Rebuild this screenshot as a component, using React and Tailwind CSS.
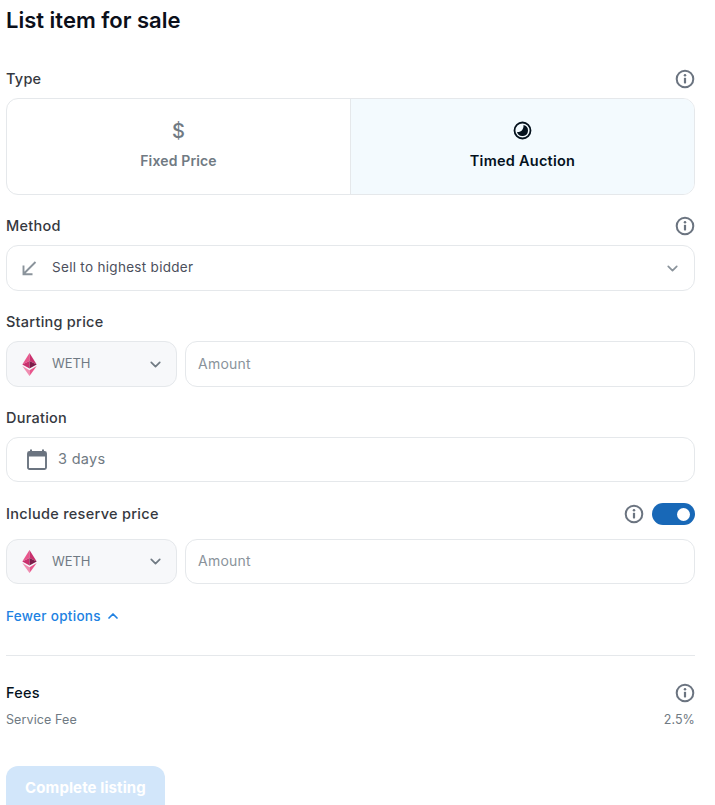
import { ChevronDown, ChevronUp } from 'lucide-react'

const InfoIcon = () => (
  <svg className="w-5 h-5 text-[#6b7480]" viewBox="0 0 20 20" fill="none">
    <circle cx="10" cy="10" r="8.3" stroke="currentColor" strokeWidth="2" />
    <circle cx="10" cy="6.2" r="1.25" fill="currentColor" />
    <rect x="8.9" y="8.8" width="2.2" height="5.6" rx="0.6" fill="currentColor" />
  </svg>
)

const EthIcon = () => (
  <svg className="w-[15px] h-[23px] shrink-0" viewBox="0 0 15 23">
    <path d="M7.5 0 L0.3 11.5 L7.5 8 Z" fill="#e8568c" />
    <path d="M7.5 0 L14.7 11.5 L7.5 8 Z" fill="#c9306d" />
    <path d="M0.3 11.5 L7.5 15.6 L7.5 8 Z" fill="#c9306d" />
    <path d="M14.7 11.5 L7.5 15.6 L7.5 8 Z" fill="#7d1d4a" />
    <path d="M0.3 13 L7.5 17.2 L7.5 23 Z" fill="#f08db0" />
    <path d="M14.7 13 L7.5 17.2 L7.5 23 Z" fill="#e8568c" />
  </svg>
)

const SectionLabel = ({ children, right }) => (
  <div className="flex items-center justify-between h-5 mb-[9px]">
    <span className="text-[14.5px] font-[550] tracking-[0.25px] text-[#353840]">{children}</span>
    {right}
  </div>
)

const PriceRow = ({ height }) => (
  <div className="flex gap-2">
    <div className={`w-[171px] ${height} shrink-0 flex items-center bg-[#f7f8fa] border border-[#e5e8eb] rounded-xl pl-[15px] pr-3`}>
      <EthIcon />
      <span className="ml-[15px] text-[13px] tracking-[-0.1px] text-[#707a83]">WETH</span>
      <ChevronDown className="ml-auto w-[17px] h-[17px] text-[#707a83]" strokeWidth={2.4} />
    </div>
    <div className={`flex-1 ${height} flex items-center border border-[#e5e8eb] rounded-xl px-3`}>
      <span className="mb-px text-sm tracking-[0.25px] text-[#8a939b]">Amount</span>
    </div>
  </div>
)

export default function App() {
  return (
    <div className="min-h-screen h-[805px] overflow-hidden bg-white pl-[6px] pr-5 font-['Inter',sans-serif]">
      <h1 className="pt-[6px] h-[69px] text-[22px] leading-7 font-semibold text-[#0b0f1a]">List item for sale</h1>

      <SectionLabel right={<InfoIcon />}>Type</SectionLabel>
      <div className="flex h-[97px] border border-[#e5e8eb] rounded-xl overflow-hidden">
        <div className="flex-1 flex flex-col items-center pt-5 border-r border-[#e5e8eb]">
          <span className="h-6 text-[20px] leading-6 font-medium text-[#707a83]">$</span>
          <span className="mt-2 text-sm font-semibold tracking-[0.15px] text-[#707a83]">Fixed Price</span>
        </div>
        <div className="flex-1 flex flex-col items-center pt-[22px] bg-[#f3fafe]">
          <svg className="w-[19px] h-[19px]" viewBox="0 0 19 19" fill="none">
            <circle cx="9.5" cy="9.5" r="8" stroke="#04111d" strokeWidth="1.8" />
            <path d="M10.5 4 A5.6 5.6 0 1 1 4 11 C8 11.4 10.8 8.6 10.5 4 Z" fill="#04111d" />
          </svg>
          <span className="mt-[10px] text-[14.5px] font-semibold tracking-[0.25px] text-[#04111d]">Timed Auction</span>
        </div>
      </div>

      <div className="mt-[21px]">
        <SectionLabel right={<InfoIcon />}>Method</SectionLabel>
        <div className="h-[46px] flex items-center border border-[#e5e8eb] rounded-xl pl-[14px] pr-[13px]">
          <svg className="w-[17px] h-[17px] text-[#8a939b]" viewBox="0 0 17 17" fill="none" stroke="currentColor" strokeWidth="1.9">
            <path d="M14.5 2 L3 13.5 M2.5 5.5 V14.2 H11.5" />
          </svg>
          <span className="ml-[14px] mb-px text-[13.5px] tracking-[0.3px] text-[#4c505c]">Sell to highest bidder</span>
          <ChevronDown className="ml-auto w-[17px] h-[17px] text-[#8a939b]" strokeWidth={2.4} />
        </div>
      </div>

      <div className="mt-[21px]">
        <SectionLabel>Starting price</SectionLabel>
        <PriceRow height="h-[46px]" />
      </div>

      <div className="mt-[21px]">
        <SectionLabel>Duration</SectionLabel>
        <div className="h-[45px] flex items-center border border-[#e5e8eb] rounded-xl pl-5">
          <svg className="w-[20px] h-[21px] text-[#6b7480]" viewBox="0 0 20 21" fill="none">
            <path d="M4 0.5 V3 M16 0.5 V3" stroke="currentColor" strokeWidth="2" />
            <rect x="1" y="3" width="18" height="17" rx="1.5" stroke="currentColor" strokeWidth="1.9" />
            <rect x="1" y="3" width="18" height="4.5" fill="currentColor" />
          </svg>
          <span className="ml-[11px] mb-px text-[14.5px] tracking-[0.3px] text-[#707a83]">3 days</span>
        </div>
      </div>

      <div className="mt-[20px]">
        <div className="flex items-center justify-between h-6 mb-[13px]">
          <span className="text-[14.5px] font-[550] tracking-[0.3px] text-[#353840]">Include reserve price</span>
          <div className="flex items-center gap-[8px]">
            <InfoIcon />
            <div className="w-[43px] h-[22px] rounded-full bg-[#1868b7] flex items-center justify-end pr-[5px]">
              <span className="w-[13px] h-[13px] rounded-full bg-white" />
            </div>
          </div>
        </div>
        <PriceRow height="h-[45px]" />
      </div>

      <div className="mt-[22px] h-5 flex items-center gap-[4px] text-[13.5px] font-[550] tracking-[0.3px] text-[#2081e2]">
        Fewer options
        <ChevronUp className="w-4 h-4" strokeWidth={2.6} />
      </div>

      <hr className="mt-[29px] border-t border-[#e5e8eb]" />

      <div className="mt-[27px] flex items-center justify-between h-5">
        <span className="text-[14.5px] font-[550] tracking-[0.25px] text-[#04111d]">Fees</span>
        <InfoIcon />
      </div>
      <div className="mt-[7px] flex items-center justify-between h-5 text-[12.5px] tracking-[0.1px] text-[#707a83]">
        <span>Service Fee</span>
        <span>2.5%</span>
      </div>

      <button className="mt-[36px] w-[159px] h-[50px] pb-[5px] rounded-xl bg-[#d2e6fa] text-white text-[15px] font-bold text-center tracking-[0.1px]">
        Complete listing
      </button>
    </div>
  )
}
